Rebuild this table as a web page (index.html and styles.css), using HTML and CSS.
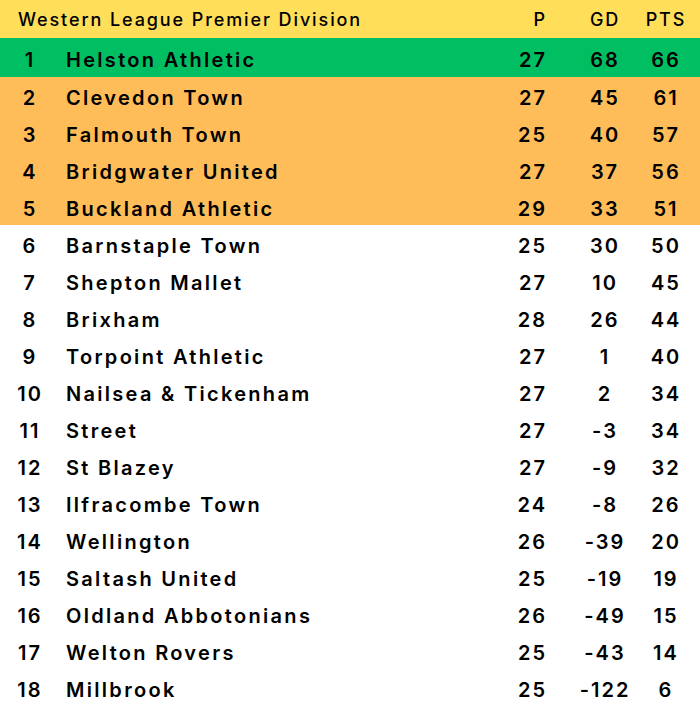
FILE: index.html
```html
<!DOCTYPE html>
<html lang="en">
<head>
<meta charset="utf-8">
<title>Western League Premier Division</title>
<link rel="stylesheet" href="styles.css">
</head>
<body>
<div class="table">
  <div class="row head">
    <div class="title">Western League Premier Division</div>
    <div class="p">P</div>
    <div class="gd">GD</div>
    <div class="pts">PTS</div>
  </div>
  <div class="row first"><div class="pos">1</div><div class="name">Helston Athletic</div><div class="p">27</div><div class="gd">68</div><div class="pts">66</div></div>
  <div class="row promo"><div class="pos">2</div><div class="name">Clevedon Town</div><div class="p">27</div><div class="gd">45</div><div class="pts">61</div></div>
  <div class="row promo"><div class="pos">3</div><div class="name">Falmouth Town</div><div class="p">25</div><div class="gd">40</div><div class="pts">57</div></div>
  <div class="row promo"><div class="pos">4</div><div class="name">Bridgwater United</div><div class="p">27</div><div class="gd">37</div><div class="pts">56</div></div>
  <div class="row promo"><div class="pos">5</div><div class="name">Buckland Athletic</div><div class="p">29</div><div class="gd">33</div><div class="pts">51</div></div>
  <div class="row"><div class="pos">6</div><div class="name">Barnstaple Town</div><div class="p">25</div><div class="gd">30</div><div class="pts">50</div></div>
  <div class="row"><div class="pos">7</div><div class="name">Shepton Mallet</div><div class="p">27</div><div class="gd">10</div><div class="pts">45</div></div>
  <div class="row"><div class="pos">8</div><div class="name">Brixham</div><div class="p">28</div><div class="gd">26</div><div class="pts">44</div></div>
  <div class="row"><div class="pos">9</div><div class="name">Torpoint Athletic</div><div class="p">27</div><div class="gd">1</div><div class="pts">40</div></div>
  <div class="row"><div class="pos">10</div><div class="name">Nailsea &amp; Tickenham</div><div class="p">27</div><div class="gd">2</div><div class="pts">34</div></div>
  <div class="row"><div class="pos">11</div><div class="name">Street</div><div class="p">27</div><div class="gd">-3</div><div class="pts">34</div></div>
  <div class="row"><div class="pos">12</div><div class="name">St Blazey</div><div class="p">27</div><div class="gd">-9</div><div class="pts">32</div></div>
  <div class="row"><div class="pos">13</div><div class="name">Ilfracombe Town</div><div class="p">24</div><div class="gd">-8</div><div class="pts">26</div></div>
  <div class="row"><div class="pos">14</div><div class="name">Wellington</div><div class="p">26</div><div class="gd">-39</div><div class="pts">20</div></div>
  <div class="row"><div class="pos">15</div><div class="name">Saltash United</div><div class="p">25</div><div class="gd">-19</div><div class="pts">19</div></div>
  <div class="row"><div class="pos">16</div><div class="name">Oldland Abbotonians</div><div class="p">26</div><div class="gd">-49</div><div class="pts">15</div></div>
  <div class="row"><div class="pos">17</div><div class="name">Welton Rovers</div><div class="p">25</div><div class="gd">-43</div><div class="pts">14</div></div>
  <div class="row"><div class="pos">18</div><div class="name">Millbrook</div><div class="p">25</div><div class="gd">-122</div><div class="pts">6</div></div>
</div>
</body>
</html>
```
FILE: styles.css
```css
html, body {
  margin: 0;
  padding: 0;
  background: #ffffff;
}
body {
  font-family: Inter, "Noto Sans", sans-serif;
  color: #000000;
}
.table {
  width: 700px;
}
.row {
  display: grid;
  grid-template-columns: 58px 412px 104px 60px 62px 4px;
  align-items: center;
  height: 37px;
  font-size: 20px;
  font-weight: 600;
  line-height: 1;
  letter-spacing: 2px;
  padding-top: 4px;
  box-sizing: border-box;
}
.head {
  height: 38px;
  padding-top: 1px;
  background: #ffde59;
  font-size: 18px;
  font-weight: 500;
  letter-spacing: 1.9px;
}
.first {
  height: 39px;
  background: #00bf63;
}
.promo {
  background: #ffbd59;
}
.title {
  grid-column: 1 / 3;
  padding-left: 18px;
}
.pos {
  text-align: center;
  padding-left: 2px;
}
.name {
  padding-left: 8px;
  letter-spacing: 2.3px;
}
.p {
  text-align: right;
  padding-right: 27px;
}
.gd, .pts {
  text-align: center;
  padding-left: 2px;
}
```
